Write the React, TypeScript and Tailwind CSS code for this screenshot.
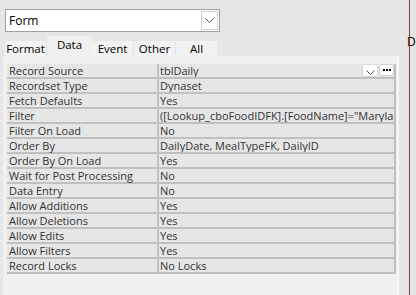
import React from 'react';

const rows: [string, string][] = [
  ['Record Source', 'tblDaily'],
  ['Recordset Type', 'Dynaset'],
  ['Fetch Defaults', 'Yes'],
  ['Filter', '([Lookup_cboFoodIDFK].[FoodName]="Maryland Crab Cakes")'],
  ['Filter On Load', 'No'],
  ['Order By', 'DailyDate, MealTypeFK, DailyID'],
  ['Order By On Load', 'Yes'],
  ['Wait for Post Processing', 'No'],
  ['Data Entry', 'No'],
  ['Allow Additions', 'Yes'],
  ['Allow Deletions', 'Yes'],
  ['Allow Edits', 'Yes'],
  ['Allow Filters', 'Yes'],
  ['Record Locks', 'No Locks'],
];

const Chevron: React.FC = () => (
  <svg width="9" height="5" viewBox="0 0 9 5" fill="none">
    <path d="M0.5 0.5 L4.5 4.5 L8.5 0.5" stroke="#555" strokeWidth="1" />
  </svg>
);

const App: React.FC = () => {
  return (
    <div className="relative w-[416px] h-[295px] overflow-hidden bg-[#e6e6e6] font-['Open_Sans','Noto_Sans',sans-serif] text-[11px] text-[#333]">
      {/* right side splitter, with the edge of the next pane's caption */}
      <span className="absolute left-[407px] top-[35px] text-[12px] text-black leading-[14px]">D</span>
      <div className="absolute left-[409px] top-0 w-px h-full bg-[#8b3a3a]" />

      {/* selector */}
      <div className="ml-[5px] pt-[9px]">
        <div className="flex items-center w-[215px] h-[23px] border border-[#a0a0a0] bg-white">
          <span className="flex-1 pl-[3px] text-[12px] text-black leading-none">Form</span>
          <div className="flex items-center justify-center w-[17px] h-[19px] mr-[1px] border border-[#cfcfcf] bg-white">
            <Chevron />
          </div>
        </div>
      </div>

      {/* tabs */}
      <div className="flex items-end ml-[5px] mt-[4px] h-[20px] text-[11.5px] text-black leading-none">
        <div className="w-[41px] h-[15px] flex items-center justify-center bg-[#f2f2f2]">Format</div>
        <div className="w-[45px] h-[20px] ml-px flex items-center justify-center bg-[#f0f0f0] pb-[2px]">Data</div>
        <div className="w-[41px] h-[15px] flex items-center justify-center bg-[#f2f2f2]">Event</div>
        <div className="w-[41px] h-[15px] ml-px flex items-center justify-center bg-[#f2f2f2]">Other</div>
        <div className="w-[41px] h-[15px] ml-px flex items-center justify-center bg-[#f2f2f2]">All</div>
      </div>

      {/* property sheet */}
      <div className="ml-[3px] w-[396px] h-[239px] bg-[#f0f0f0] border-r-2 border-[#f8f8f8] pl-[4px] pt-[8px]">
        <div className="w-[389px] border-r-2 border-[#c0c0c0]">
          {rows.map(([k, v], i) => (
            <div key={k} className="flex h-[15px] border-b-2 border-[#c0c0c0] bg-[#e6e6e6]">
              <div className="w-[152px] shrink-0 pl-[2px] border-r-2 border-[#c0c0c0] leading-[13px] whitespace-nowrap">
                {k}
              </div>
              <div className="relative flex-1 min-w-0 pl-[1px] leading-[13px] whitespace-nowrap overflow-hidden">
                {v}
                {i === 0 && (
                  <div className="absolute right-0 top-0 flex gap-[1px] h-[13px]">
                    <div className="flex items-end justify-center w-[16px] h-[13px] bg-white border border-[#d8d8d8] rounded-[2px] pb-[1px]">
                      <Chevron />
                    </div>
                    <div className="flex items-center justify-center gap-[1px] w-[15px] h-[12px] bg-white border border-[#cfcfcf] rounded-[3px]">
                      <span className="w-[2px] h-[2px] bg-black" />
                      <span className="w-[2px] h-[2px] bg-black" />
                      <span className="w-[2px] h-[2px] bg-black" />
                    </div>
                  </div>
                )}
              </div>
            </div>
          ))}
        </div>
      </div>
    </div>
  );
};

export default App;
